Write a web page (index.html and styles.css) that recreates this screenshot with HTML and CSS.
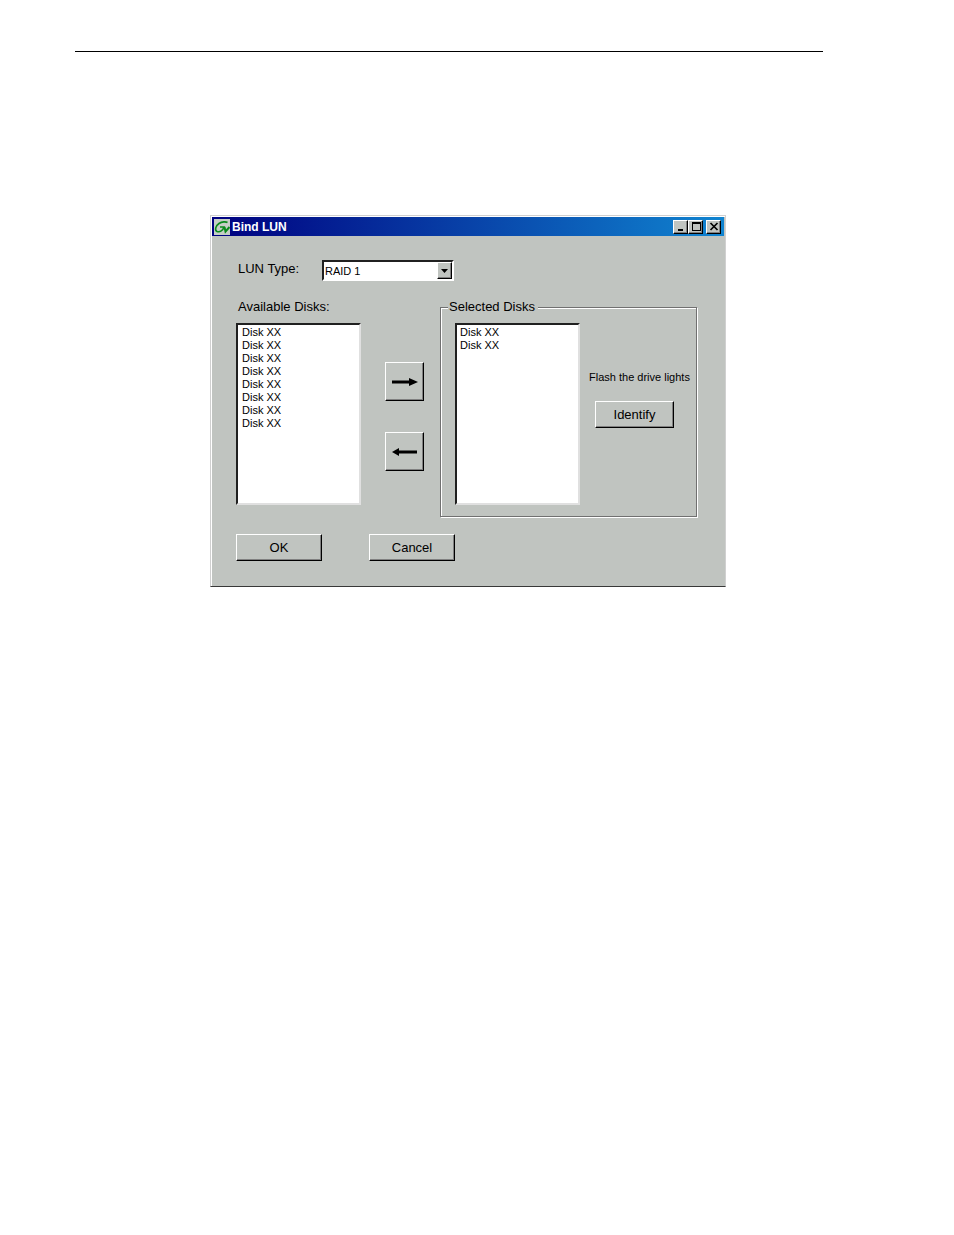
FILE: index.html
```html
<!DOCTYPE html>
<html lang="en">
<head>
    <meta charset="UTF-8">
    <meta name="viewport" content="width=device-width, initial-scale=1.0">
    <title>Bind LUN</title>
    <link rel="stylesheet" href="styles.css">
</head>
<body>

<hr class="page-rule">

<form class="dialog" onsubmit="return false">
    <div class="titlebar">
        <svg class="logo" viewBox="0 0 16 16">
            <rect width="16" height="16" fill="#c6cec6"/>
            <path d="M13.500 3.500C12 2.500 8 2.500 5 4.500C1.500 7 0.500 11 3 12.500C6 13.500 9 11.500 10 8H6" fill="none" stroke="#0a8a1c" stroke-width="1.600"/>
            <path d="M10.500 8l1 4.500L15.500 8" fill="none" stroke="#0a8a1c" stroke-width="2"/>
        </svg>
        <h1 class="title">Bind LUN</h1>
        <button type="button" class="caption-btn" aria-label="Minimize">
            <svg viewBox="0 0 12 11"><path d="M3 8h5v2H3z"/></svg>
        </button>
        <button type="button" class="caption-btn" aria-label="Maximize">
            <svg viewBox="0 0 12 11"><path d="M2 1h9v9H2zM3 3v6h7V3z" fill-rule="evenodd"/></svg>
        </button>
        <button type="button" class="caption-btn close" aria-label="Close">
            <svg viewBox="0 0 12 11"><path d="M2.500 2l7 7M9.500 2l-7 7" stroke="#000" stroke-width="1.700"/></svg>
        </button>
    </div>

    <div class="content">
        <div class="type-row">
            <label for="lunType">LUN Type:</label>
            <div class="combo">
                <select id="lunType">
                    <option>RAID 1</option>
                </select>
                <span class="combo-arrow"><svg viewBox="0 0 8 4"><path d="M0 0h7L3.500 4z"/></svg></span>
            </div>
        </div>

        <div class="disks">
            <div class="available">
                <label for="available">Available Disks:</label>
                <select id="available" class="disk-list" size="12" multiple>
                    <option>Disk XX</option>
                    <option>Disk XX</option>
                    <option>Disk XX</option>
                    <option>Disk XX</option>
                    <option>Disk XX</option>
                    <option>Disk XX</option>
                    <option>Disk XX</option>
                    <option>Disk XX</option>
                </select>
            </div>

            <div class="move">
                <button type="button" class="btn move-btn" aria-label="Add disk">
                    <svg viewBox="0 0 26 8"><path d="M0 2.500h17V0l9 4-9 4V5.500H0z"/></svg>
                </button>
                <button type="button" class="btn move-btn" aria-label="Remove disk">
                    <svg viewBox="0 0 26 8"><path d="M25 2.500H7V0L0 4l7 4V5.500h18z"/></svg>
                </button>
            </div>

            <fieldset class="selected">
                <legend>Selected Disks</legend>
                <select class="disk-list" size="12" multiple aria-label="Selected Disks">
                    <option>Disk XX</option>
                    <option>Disk XX</option>
                </select>
                <div class="identify">
                    <p id="flashHint">Flash the drive lights</p>
                    <button type="button" class="btn identify-btn" aria-describedby="flashHint">Identify</button>
                </div>
            </fieldset>
        </div>

        <div class="actions">
            <button type="submit" class="btn action-btn">OK</button>
            <button type="button" class="btn action-btn">Cancel</button>
        </div>
    </div>
</form>

</body>
</html>
```

FILE: styles.css
```css
* {
    box-sizing: border-box;
}
body {
    margin: 0;
    padding: 51px 131px 0 75px;
    background-color: white;
    color: black;
    font-family: "Liberation Sans", Arial, sans-serif;
    font-size: 13px;
    line-height: 18px;
}
button, select {
    font-family: inherit;
    color: black;
    border-radius: 0;
}
svg {
    display: block;
}
.page-rule {
    margin: 0;
    border: none;
    border-top: 1px solid black;
}

/* Window */
.dialog {
    max-width: 516px;
    margin: 163px auto 0 135px;
    border: 1px solid #d0d0d0;
    border-bottom-color: #383838;
    padding: 1px 0 0 1px;
    background-color: #c0c4c0;
    box-shadow: inset 1px 1px white;
}
.titlebar {
    display: flex;
    align-items: center;
    height: 19px;
    margin-right: 1px;
    padding: 0 3px 0 2px;
    background: linear-gradient(to right, #000080, #1084d0);
}
.logo {
    width: 16px;
    height: 16px;
}
.title {
    flex: 1;
    margin: 0 0 0 2px;
    color: white;
    font-size: 12px;
}
.caption-btn {
    display: flex;
    align-items: center;
    justify-content: center;
    width: 15px;
    height: 14px;
    padding: 0;
    background-color: #c0c4c0;
    border: 1px solid;
    border-color: white black black white;
    box-shadow: inset -1px -1px #808080;
}
.caption-btn svg {
    width: 12px;
    height: 11px;
}
.close {
    margin-left: 3px;
}
.content {
    padding: 24px 27px 25px 24px;
}

/* LUN type */
.type-row {
    display: flex;
    margin-bottom: 17px;
}
.type-row label {
    width: 86px;
    padding-left: 2px;
}
.combo {
    position: relative;
    width: 132px;
    height: 21px;
}
.combo select {
    appearance: none;
    width: 100%;
    height: 100%;
    padding: 0 18px 0 1px;
    background-color: white;
    border: 2px solid;
    border-color: #202020 white white #202020;
    font-size: 11px;
}
.combo-arrow {
    position: absolute;
    top: 2px;
    right: 2px;
    display: flex;
    align-items: center;
    justify-content: center;
    width: 15px;
    height: 17px;
    background-color: #c0c4c0;
    border: 1px solid;
    border-color: white black black white;
    box-shadow: inset -1px -1px #808080;
    pointer-events: none;
}
.combo-arrow svg {
    width: 8px;
    height: 4px;
}

/* Disk lists */
.disks {
    display: flex;
}
.available {
    display: flex;
    flex-direction: column;
    gap: 7px;
}
.available label {
    padding-left: 2px;
}
.disk-list {
    width: 125px;
    height: 182px;
    padding: 1px 2px;
    background-color: white;
    border: 2px solid;
    border-color: #202020 #e0e0e0 #e0e0e0 #202020;
    font-size: 11px;
    overflow: hidden;
}
.disk-list option {
    min-height: 13px;
    padding: 0 2px;
    line-height: 13px;
}
.move {
    display: flex;
    flex-direction: column;
    gap: 31px;
    padding: 64px 16px 0 24px;
}
.selected {
    display: flex;
    flex: 1;
    min-width: 0;
    margin: 0 1px 1px 0;
    padding: 7px 0 11px 14px;
    border: 1px solid #707070;
    box-shadow: 1px 1px white, inset 1px 1px white;
}
.selected legend {
    margin-left: -7px;
    padding: 0 3px 0 1px;
    background-color: #c0c4c0;
}
.selected .disk-list option {
    padding: 0 1px;
}
.identify {
    flex: 1;
    padding: 45px 0 0 9px;
}
.identify p {
    margin: 0 0 15px;
    font-size: 11px;
    white-space: nowrap;
}

/* Buttons */
.btn {
    display: flex;
    align-items: center;
    justify-content: center;
    height: 27px;
    padding: 0;
    background-color: #c0c4c0;
    border: 1px solid;
    border-color: white black black white;
    box-shadow: inset -1px -1px #808080;
    font-size: 13px;
}
.move-btn {
    width: 39px;
    height: 39px;
}
.move-btn svg {
    width: 26px;
    height: 8px;
}
.identify-btn {
    width: 79px;
    margin-left: 6px;
}
.actions {
    display: flex;
    gap: 47px;
    margin-top: 16px;
}
.action-btn {
    width: 86px;
}
```
